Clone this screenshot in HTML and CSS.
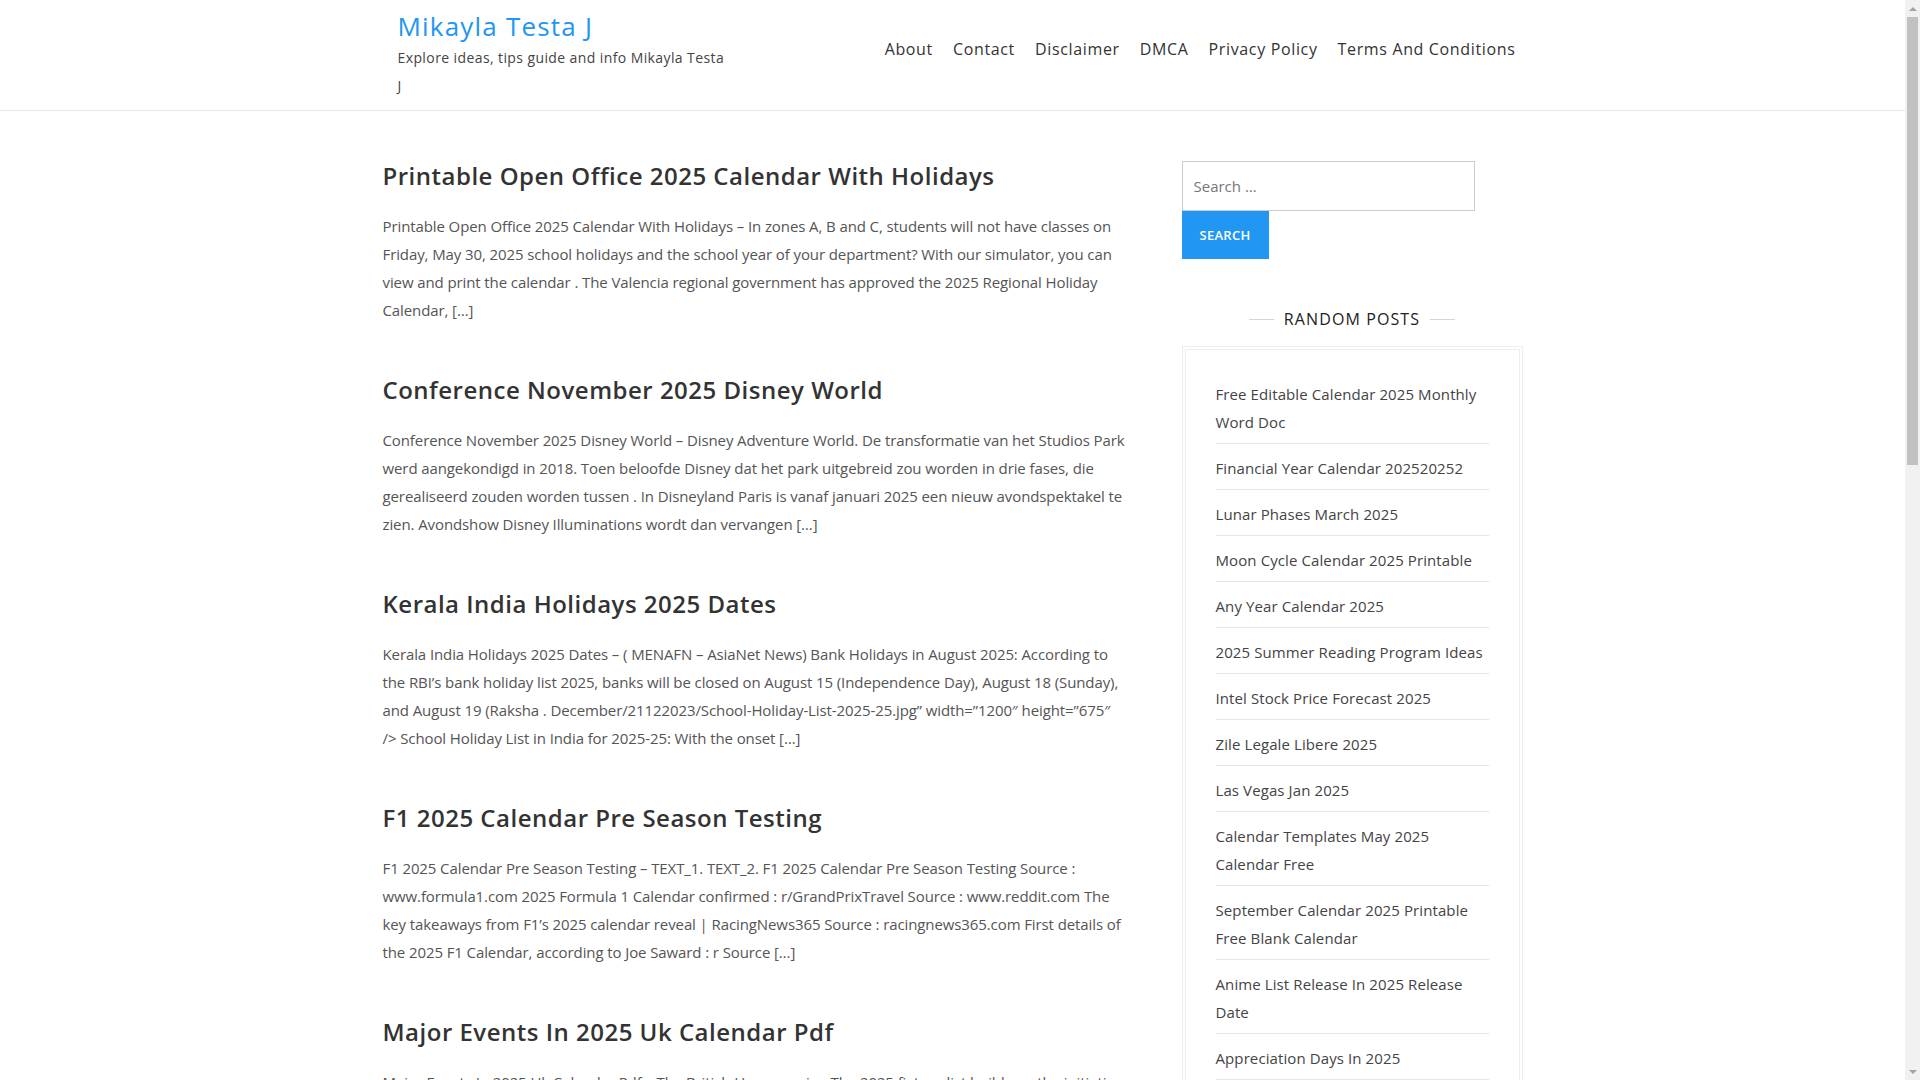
FILE: index.html
```html
<!DOCTYPE html>
<html lang="en">
<head>
<meta charset="utf-8">
<title>Mikayla Testa J</title>
<link rel="stylesheet" href="styles.css">
</head>
<body>
<header class="site-header">
  <div class="container header-inner">
    <div class="branding">
      <p class="site-title"><a href="#">Mikayla Testa J</a></p>
      <p class="site-desc">Explore ideas, tips guide and info Mikayla Testa J</p>
    </div>
    <nav class="main-nav">
      <ul>
        <li><a href="#">About</a></li>
        <li><a href="#">Contact</a></li>
        <li><a href="#">Disclaimer</a></li>
        <li><a href="#">DMCA</a></li>
        <li><a href="#">Privacy Policy</a></li>
        <li><a href="#">Terms And Conditions</a></li>
      </ul>
    </nav>
  </div>
</header>

<div class="container content">
  <main class="posts">
    <article class="post">
      <h2 class="post-title"><a href="#">Printable Open Office 2025 Calendar With Holidays</a></h2>
      <p class="excerpt">Printable Open Office 2025 Calendar With Holidays – In zones A, B and C, students will not have classes on Friday, May 30, 2025 school holidays and the school year of your department? With our simulator, you can view and print the calendar . The Valencia regional government has approved the 2025 Regional Holiday Calendar, […]</p>
    </article>
    <article class="post">
      <h2 class="post-title"><a href="#">Conference November 2025 Disney World</a></h2>
      <p class="excerpt">Conference November 2025 Disney World – Disney Adventure World. De transformatie van het Studios Park werd aangekondigd in 2018. Toen beloofde Disney dat het park uitgebreid zou worden in drie fases, die gerealiseerd zouden worden tussen . In Disneyland Paris is vanaf januari 2025 een nieuw avondspektakel te zien. Avondshow Disney Illuminations wordt dan vervangen […]</p>
    </article>
    <article class="post">
      <h2 class="post-title"><a href="#">Kerala India Holidays 2025 Dates</a></h2>
      <p class="excerpt">Kerala India Holidays 2025 Dates – ( MENAFN – AsiaNet News) Bank Holidays in August 2025: According to the RBI’s bank holiday list 2025, banks will be closed on August 15 (Independence Day), August 18 (Sunday), and August 19 (Raksha . December/21122023/School-Holiday-List-2025-25.jpg” width=”1200″ height=”675″ /&gt;&nbsp;School Holiday List in India for 2025-25: With the onset […]</p>
    </article>
    <article class="post">
      <h2 class="post-title"><a href="#">F1 2025 Calendar Pre Season Testing</a></h2>
      <p class="excerpt">F1 2025 Calendar Pre Season Testing – TEXT_1. TEXT_2. F1 2025 Calendar Pre Season Testing Source : www.formula1.com 2025 Formula 1 Calendar confirmed : r/GrandPrixTravel Source : www.reddit.com The key takeaways from F1’s 2025 calendar reveal | RacingNews365 Source : racingnews365.com First details of the 2025 F1 Calendar, according to Joe Saward : r Source […]</p>
    </article>
    <article class="post">
      <h2 class="post-title"><a href="#">Major Events In 2025 Uk Calendar Pdf</a></h2>
      <p class="excerpt">Major Events In 2025 Uk Calendar Pdf – The British Homecoming The 2025 fixture list builds on the initiative of the organisers to bring the biggest events in the country together in one calendar, with dates announced for the whole season ahead […]</p>
    </article>
  </main>

  <aside class="sidebar">
    <form class="search-form">
      <input class="search-field" type="search" placeholder="Search …">
      <button class="search-submit" type="button">Search</button>
    </form>

    <section class="widget">
      <h3 class="widget-title"><span>Random Posts</span></h3>
      <div class="widget-box">
        <ul class="random-list">
          <li><a href="#">Free Editable Calendar 2025 Monthly Word Doc</a></li>
          <li><a href="#">Financial Year Calendar 202520252</a></li>
          <li><a href="#">Lunar Phases March 2025</a></li>
          <li><a href="#">Moon Cycle Calendar 2025 Printable</a></li>
          <li><a href="#">Any Year Calendar 2025</a></li>
          <li><a href="#">2025 Summer Reading Program Ideas</a></li>
          <li><a href="#">Intel Stock Price Forecast 2025</a></li>
          <li><a href="#">Zile Legale Libere 2025</a></li>
          <li><a href="#">Las Vegas Jan 2025</a></li>
          <li><a href="#">Calendar Templates May 2025 Calendar Free</a></li>
          <li><a href="#">September Calendar 2025 Printable Free Blank Calendar</a></li>
          <li><a href="#">Anime List Release In 2025 Release Date</a></li>
          <li><a href="#">Appreciation Days In 2025</a></li>
          <li><a href="#">Calendar 2025 With Week Numbers</a></li>
        </ul>
      </div>
    </section>
  </aside>
</div>

<div class="scrollbar" aria-hidden="true">
  <span class="sb-arrow sb-up"></span>
  <span class="sb-thumb"></span>
  <span class="sb-space"></span>
  <span class="sb-arrow sb-down"></span>
</div>
</body>
</html>
```

FILE: styles.css
```css
* { box-sizing: border-box; }

html, body {
  margin: 0;
  padding: 0;
}

body {
  font-family: "Open Sans", "Noto Sans", "DejaVu Sans", sans-serif;
  color: #555;
  background: #fff;
  font-size: 15px;
  padding-right: 15px;
}

a { text-decoration: none; color: inherit; }

.container {
  width: 1140px;
  margin: 0 auto;
}

/* Header */
.site-header {
  border-bottom: 1px solid #e8e8e8;
  height: 111px;
}

.header-inner {
  display: flex;
  justify-content: space-between;
  align-items: flex-start;
}

.branding {
  padding-left: 15px;
  padding-top: 8px;
}

.site-title {
  margin: 0;
  font-size: 26px;
  font-weight: 500;
  line-height: 36px;
  color: #2196f3;
  letter-spacing: 1.2px;
}

.site-desc {
  margin: 0;
  width: 330px;
  font-size: 14px;
  line-height: 28px;
  color: #444;
  letter-spacing: 0.4px;
}

.main-nav {
  padding-top: 36px;
  padding-right: 7px;
}

.main-nav ul {
  list-style: none;
  margin: 0;
  padding: 0;
  display: flex;
  gap: 20px;
}

.main-nav a {
  font-size: 16px;
  font-weight: 500;
  line-height: 26px;
  color: #333;
  letter-spacing: 0.65px;
}

/* Content */
.content {
  display: flex;
  justify-content: space-between;
  padding-top: 49px;
}

.posts {
  width: 750px;
}

.post {
  margin-bottom: 50px;
}

.post-title {
  margin: 0 0 20px;
  font-size: 24px;
  font-weight: 600;
  line-height: 32px;
  color: #333;
  letter-spacing: 0.5px;
}

.excerpt {
  margin: 0;
  font-size: 15px;
  line-height: 28px;
  color: #555;
  letter-spacing: -0.1px;
}

/* Sidebar */
.sidebar {
  width: 341px;
  padding-top: 1px;
}

.search-form {
  display: flex;
  flex-direction: column;
  align-items: flex-start;
}

.search-field {
  width: 293px;
  height: 50px;
  border: 1px solid #ccc;
  padding: 0 11px;
  font-family: inherit;
  font-size: 15px;
  color: #555;
  outline: none;
  border-radius: 0;
  -webkit-appearance: none;
  appearance: none;
}

.search-field::placeholder { color: #777; }

.search-submit {
  width: 87px;
  height: 48px;
  border: none;
  background: #2196f3;
  color: #fff;
  font-family: inherit;
  font-size: 13px;
  font-weight: 600;
  text-transform: uppercase;
  letter-spacing: 0.3px;
  padding: 0;
  cursor: pointer;
}

.widget {
  margin-top: 47px;
}

.widget-title {
  margin: 0 0 14px;
  display: flex;
  align-items: center;
  justify-content: center;
  gap: 10px;
  font-size: 16px;
  font-weight: 500;
  line-height: 26px;
  text-transform: uppercase;
  letter-spacing: 1.1px;
  color: #222;
}

.widget-title::before,
.widget-title::after {
  content: "";
  width: 25px;
  height: 1px;
  background: #d5d5d5;
}

.widget-box {
  border: 1px solid #eee;
  padding: 2px;
}

.random-list {
  list-style: none;
  margin: 0;
  border: 1px solid #eee;
  padding: 20px 30px;
}

.random-list li {
  padding: 10px 0 7px;
  border-bottom: 1px solid #e5e5e5;
  font-size: 15px;
  line-height: 28px;
  color: #444;
  letter-spacing: 0.1px;
}

/* Decorative browser scrollbar (the reference shows one) */
.scrollbar {
  position: fixed;
  top: 0;
  right: 0;
  width: 15px;
  height: 100vh;
  background: #f1f1f1;
  display: flex;
  flex-direction: column;
  align-items: center;
}

.sb-arrow {
  width: 15px;
  height: 17px;
  display: flex;
  align-items: center;
  justify-content: center;
}

.sb-up::before,
.sb-down::before {
  content: "";
  width: 0;
  height: 0;
  border-left: 4px solid transparent;
  border-right: 4px solid transparent;
}

.sb-up::before { border-bottom: 4px solid #a3a3a3; }
.sb-down::before { border-top: 4px solid #a3a3a3; }

.sb-thumb {
  width: 11px;
  height: 448px;
  background: #c1c1c1;
}

.sb-space { flex: 1; }
```
